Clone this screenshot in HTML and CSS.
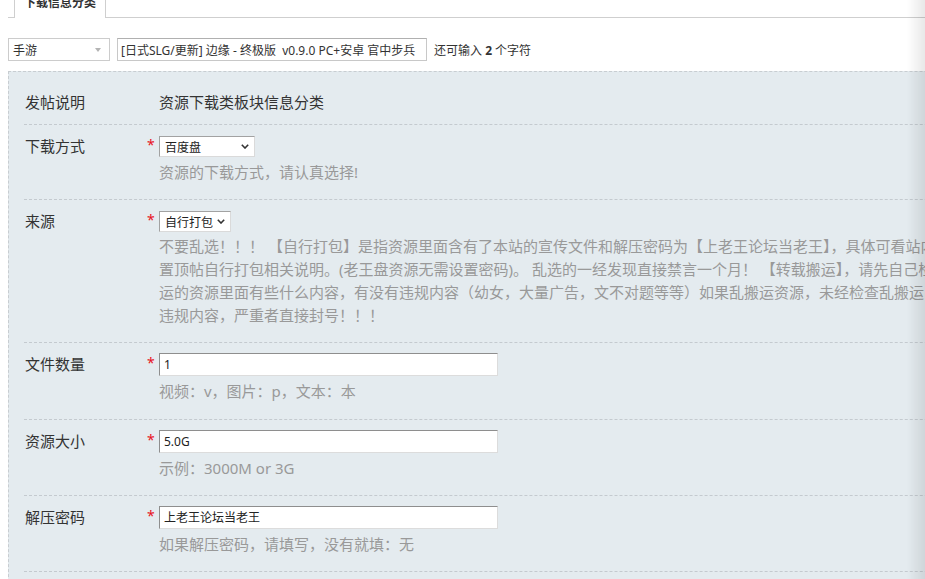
FILE: index.html
```html
<!DOCTYPE html>
<html lang="zh-CN">
<head>
<meta charset="utf-8">
<title>下载信息分类</title>
<link rel="stylesheet" href="styles.css">
</head>
<body>
<div class="page">
  <div class="tabs">
    <div class="tab">下载信息分类</div>
  </div>

  <div class="subject">
    <div class="typesel"><span>手游</span><span class="tri"></span></div>
    <input class="title-input" type="text" value="[日式SLG/更新] 边缘 - 终极版  v0.9.0 PC+安卓 官中步兵">
    <span class="remain">还可输入 <strong>2</strong> 个字符</span>
  </div>

  <div class="box">
    <div class="row first">
      <div class="label">发帖说明</div>
      <div class="req"></div>
      <div class="field plain">资源下载类板块信息分类</div>
    </div>

    <div class="row">
      <div class="label">下载方式</div>
      <div class="req">*</div>
      <div class="field">
        <div class="sel sel-wide"><span>百度盘</span><svg class="chev" width="8" height="5" viewBox="0 0 8 5"><path d="M0.8 0.8 L4 4 L7.2 0.8" fill="none" stroke="#333" stroke-width="1.6"/></svg></div>
        <div class="help">资源的下载方式，请认真选择!</div>
      </div>
    </div>

    <div class="row">
      <div class="label">来源</div>
      <div class="req">*</div>
      <div class="field">
        <div class="sel sel-narrow"><span>自行打包</span><svg class="chev" width="8" height="5" viewBox="0 0 8 5"><path d="M0.8 0.8 L4 4 L7.2 0.8" fill="none" stroke="#333" stroke-width="1.6"/></svg></div>
        <div class="help nowrap">不要乱选！！！ 【自行打包】是指资源里面含有了本站的宣传文件和解压密码为【上老王论坛当老王】，具体可看站内<br>置顶帖自行打包相关说明。(老王盘资源无需设置密码)。 乱选的一经发现直接禁言一个月！ 【转载搬运】，请先自己检查搬<br>运的资源里面有些什么内容，有没有违规内容（幼女，大量广告，文不对题等等）如果乱搬运资源，未经检查乱搬运出现<br>违规内容，严重者直接封号！！！</div>
      </div>
    </div>

    <div class="row">
      <div class="label">文件数量</div>
      <div class="req">*</div>
      <div class="field">
        <input class="txt" type="text" value="1">
        <div class="help">视频：v，图片：p，文本：本</div>
      </div>
    </div>

    <div class="row">
      <div class="label">资源大小</div>
      <div class="req">*</div>
      <div class="field">
        <input class="txt" type="text" value="5.0G">
        <div class="help">示例：3000M or 3G</div>
      </div>
    </div>

    <div class="row">
      <div class="label">解压密码</div>
      <div class="req">*</div>
      <div class="field">
        <input class="txt" type="text" value="上老王论坛当老王">
        <div class="help">如果解压密码，请填写，没有就填：无</div>
      </div>
    </div>
  </div>
</div>
</body>
</html>
```

FILE: styles.css
```css
html, body {
  margin: 0;
  padding: 0;
  overflow: hidden;
  background: #fff;
}

body {
  font-family: "Noto Sans", "Noto Sans CJK SC", "Microsoft YaHei", sans-serif;
  color: #333;
}

.page {
  width: 1200px;
  padding-left: 8px;
}

.page::after {
  content: "";
  position: fixed;
  top: 0;
  right: 0;
  width: 18px;
  height: 100%;
  background: linear-gradient(to right, rgba(0, 0, 0, 0), rgba(0, 0, 0, 0.09));
  pointer-events: none;
}

/* tabs */
.tabs {
  display: flex;
  margin-top: -13px;
  padding-left: 6px;
  border-bottom: 1px solid #cfcfcf;
  height: 30px;
}

.tab {
  box-sizing: border-box;
  height: 31px;
  border: 1px solid #cfcfcf;
  border-bottom: none;
  background: #fff;
  padding: 0 9px;
  font-family: "Noto Sans CJK SC", sans-serif;
  font-size: 12px;
  font-weight: bold;
  line-height: 27px;
  color: #333;
}

/* subject line */
.subject {
  display: flex;
  align-items: center;
  margin-top: 20px;
  height: 23px;
}

.typesel {
  box-sizing: border-box;
  width: 102px;
  height: 23px;
  border: 1px solid #cccccc;
  background: #fff;
  display: flex;
  align-items: center;
  justify-content: space-between;
  padding: 0 8px 0 4px;
  font-size: 12px;
  color: #333;
}

.tri {
  width: 0;
  height: 0;
  border-left: 3px solid transparent;
  border-right: 3px solid transparent;
  border-top: 4px solid #b4b4b4;
  margin-top: 1px;
}

.title-input {
  box-sizing: border-box;
  margin: 0 0 0 7px;
  width: 310px;
  height: 23px;
  border: 1px solid #c8c8c8;
  border-top-color: #b0b0b0;
  padding: 0 3px;
  font-family: "Noto Sans", "Noto Sans CJK SC", sans-serif;
  font-size: 12px;
  color: #333;
  background: #fff;
  outline: none;
}

.remain {
  margin-left: 7px;
  font-size: 12px;
  color: #333;
}

.remain strong {
  font-weight: bold;
}

/* main box */
.box {
  margin-top: 10px;
  border-top: 1px dashed #c8cdd1;
  border-left: 1px dashed #c8cdd1;
  background: #e4ebef;
  padding-left: 15px;
  min-height: 520px;
}

.row {
  display: flex;
  align-items: flex-start;
  padding: 10px 0 15px;
  border-bottom: 1px dashed #c4cacf;
}

.row.first {
  padding: 19px 0 10px;
}

.label {
  width: 119px;
  padding-left: 1px;
  font-size: 15px;
  line-height: 22px;
  color: #333;
  flex: none;
}

.row.first .label {
  line-height: 23px;
}

.req {
  width: 15px;
  flex: none;
  color: #e8121e;
  font-size: 14px;
  line-height: 20px;
  text-indent: 3px;
}

.field {
  flex: 1;
  min-width: 0;
}

.field.plain {
  font-size: 15px;
  line-height: 23px;
  color: #333;
}

.sel {
  box-sizing: border-box;
  height: 21px;
  margin-top: 1px;
  background: #fff;
  border: 1px solid;
  border-color: #a2a2a2 #dadada #dadada #a2a2a2;
  display: flex;
  align-items: center;
  justify-content: space-between;
  font-size: 12px;
  color: #222;
  padding: 0 5px 0 5px;
}

.sel-wide {
  width: 96px;
}

.sel-narrow {
  width: 72px;
}

.chev {
  display: block;
  flex: none;
}

.txt {
  display: block;
  box-sizing: border-box;
  margin: 0;
  width: 339px;
  height: 23px;
  background: #fff;
  border: 1px solid;
  border-color: #8e8e8e #dcdcdc #dcdcdc #8e8e8e;
  padding: 0 4px;
  font-family: "Noto Sans", "Noto Sans CJK SC", sans-serif;
  font-size: 12px;
  color: #222;
  outline: none;
}

.help {
  margin-top: 4px;
  font-size: 15px;
  line-height: 23.33px;
  color: #999;
}

.help.nowrap {
  white-space: nowrap;
  line-height: 23px;
  margin-top: 3px;
}
```
